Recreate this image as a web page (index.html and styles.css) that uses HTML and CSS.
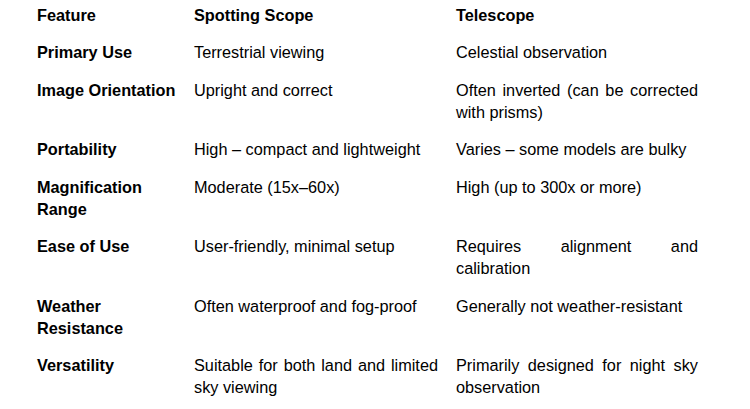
FILE: index.html
```html
<!DOCTYPE html>
<html lang="en">
<head>
<meta charset="utf-8">
<title>Spotting Scope vs Telescope</title>
<link rel="stylesheet" href="styles.css">
</head>
<body>
<table class="compare">
  <colgroup>
    <col class="c-feature">
    <col class="c-scope">
    <col class="c-tele">
  </colgroup>
  <thead>
    <tr>
      <th>Feature</th>
      <th>Spotting Scope</th>
      <th>Telescope</th>
    </tr>
  </thead>
  <tbody>
    <tr>
      <th>Primary Use</th>
      <td>Terrestrial viewing</td>
      <td>Celestial observation</td>
    </tr>
    <tr>
      <th>Image Orientation</th>
      <td>Upright and correct</td>
      <td>Often inverted (can be corrected with prisms)</td>
    </tr>
    <tr>
      <th>Portability</th>
      <td>High – compact and lightweight</td>
      <td>Varies – some models are bulky</td>
    </tr>
    <tr>
      <th>Magnification Range</th>
      <td>Moderate (15x–60x)</td>
      <td>High (up to 300x or more)</td>
    </tr>
    <tr>
      <th>Ease of Use</th>
      <td>User-friendly, minimal setup</td>
      <td>Requires alignment and calibration</td>
    </tr>
    <tr>
      <th>Weather Resistance</th>
      <td>Often waterproof and fog-proof</td>
      <td>Generally not weather-resistant</td>
    </tr>
    <tr>
      <th>Versatility</th>
      <td>Suitable for both land and limited sky viewing</td>
      <td>Primarily designed for night sky observation</td>
    </tr>
  </tbody>
</table>
</body>
</html>
```
FILE: styles.css
```css
html, body {
  margin: 0;
  padding: 0;
  background: #ffffff;
}

body {
  font-family: "Liberation Sans", Arial, sans-serif;
  font-size: 16.3px;
  line-height: 22px;
  color: #000000;
}

.compare {
  border-collapse: collapse;
  table-layout: fixed;
  width: 679px;
  margin: -4px 0 0 28px;
}

.c-feature { width: 157px; }
.c-scope { width: 262px; }
.c-tele { width: 260px; }

.compare th,
.compare td {
  padding: 7.75px 9px;
  vertical-align: top;
  text-align: justify;
}

.compare th {
  font-weight: bold;
  text-align: left;
  padding-right: 6px;
}

.compare td {
  font-weight: normal;
}
```
